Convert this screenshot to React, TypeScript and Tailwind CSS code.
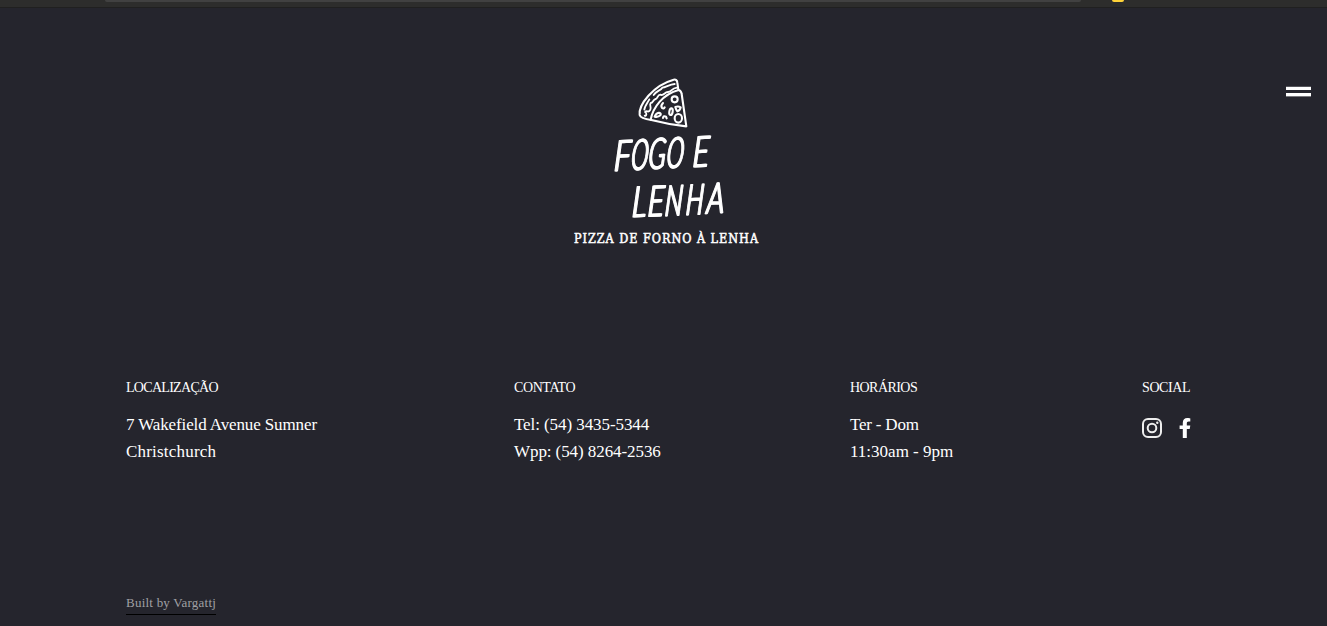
import React from "react";

type LetterProps = { char: string; x: number; y: number; w?: number };

function Letter({ char, x, y, w = 0.56 }: LetterProps) {
  return (
    <text transform={`translate(${x} ${y}) skewX(-8) skewY(-3) scale(${w} 1)`} x="-3" y="0">
      {char}
    </text>
  );
}

function Logo() {
  return (
    <svg className="h-[176px] w-[200px] shrink-0 overflow-visible" viewBox="565 75 200 176" fill="none" role="img" aria-label="Fogo e Lenha">
      <g transform="translate(630 70) scale(.33333)" stroke="#fff" strokeWidth="6.3" strokeLinecap="round" strokeLinejoin="round">
        <path d="M131 29Q141 27 142 38L145 59Q154 62 155 72L169 169Q118 164 64 150Q32 146 29 135C25 105 69 46 131 29Z" />
        <path d="M62 149C69 112 98 73 146 60" />
        <path d="M44 137C50 139 51 128 45 126C51 119 56 131 61 119C65 112 57 105 62 99C70 99 68 89 77 87C83 87 82 74 91 74C101 79 103 66 114 66C125 66 123 55 141 53" strokeWidth="5.5" />
        <path d="M43 119C44 108 53 98 58 88M71 75C80 61 91 63 97 53C108 52 118 43 134 42" strokeWidth="5.5" />
        <circle cx="134" cy="88" r="9" />
        <ellipse cx="145" cy="145" rx="11" ry="13" />
        <ellipse cx="123" cy="125" rx="5" ry="10" transform="rotate(10 123 125)" />
        <path d="M136 111Q145 108 152 112Q150 122 142 124Q138 119 136 111Z" />
        <path d="M74 140Q77 130 87 128Q95 130 91 136Q85 142 74 140Z" />
        <path d="M99 99Q91 107 96 114Q101 118 104 112M99 144Q101 136 108 140L110 145" />
      </g>
      <g className="[filter:drop-shadow(1.1px_0_0_#fff)]" fill="#fff" stroke="#fff" strokeWidth="1.5" strokeLinejoin="round" fontFamily="Lato, sans-serif" fontWeight="300" fontSize="42.5">
        <Letter char="F" x={614} y={171} w={0.68} />
        <Letter char="O" x={630.8} y={170} w={0.5} />
        <Letter char="G" x={648} y={169} w={0.54} />
        <Letter char="O" x={666.2} y={168} w={0.5} />
        <Letter char="E" x={692.7} y={167} w={0.65} />
        <Letter char="L" x={632} y={217} w={0.66} />
        <Letter char="E" x={647.7} y={216.5} w={0.65} />
        <Letter char="N" x={664.7} y={216} w={0.54} />
        <Letter char="H" x={685.5} y={215} w={0.54} />
        <Letter char="A" x={706.7} y={213.5} w={0.62} />
      </g>
      <text x="574" y="243" textLength="184" fill="#fff" stroke="#fff" strokeWidth="0.5" fontFamily="'DejaVu Serif Condensed', 'DejaVu Serif', serif" fontSize="12.5">PIZZA DE FORNO À LENHA</text>
    </svg>
  );
}

export default function App() {
  return (
    <div className="flex h-[626px] w-full flex-col overflow-hidden bg-[#25252d] font-['Liberation_Serif',serif] text-white">
      <div className="flex h-2 shrink-0 border-b border-[#202020] bg-[#2d2d2c] pl-[105px]">
        <div className="h-[2px] w-[976px] rounded-b-full bg-[#414141]" />
        <div className="ml-[31px] h-[2px] w-3 rounded-b-[2px] bg-[#ffd338]" />
      </div>
      <header className="relative flex h-[369px] shrink-0 justify-center pt-[67px]">
        <div className="flex w-full justify-center pl-[3px]"><Logo /></div>
        <button className="absolute top-[78px] right-4 flex h-[11px] w-[25px] flex-col justify-between" aria-label="Menu">
          <span className="h-1 w-full border-t border-[#55555b] bg-white" />
          <span className="h-1 w-full border-b border-[#77777c] bg-white" />
        </button>
      </header>
      <main className="grid h-[216px] shrink-0 grid-cols-[388px_336px_292px_auto] pl-[126px] whitespace-nowrap">
        <section>
          <h2 className="text-[14px] leading-[21px] tracking-[-0.7px]">LOCALIZAÇÃO</h2>
          <p className="mt-[13px] text-[17px] leading-[27px] tracking-[-0.12px]">7 Wakefield Avenue Sumner<br /><span className="tracking-[0.2px]">Christchurch</span></p>
        </section>
        <section>
          <h2 className="text-[14px] leading-[21px] tracking-[-0.4px]">CONTATO</h2>
          <p className="mt-[13px] text-[17px] leading-[27px] tracking-[-0.08px]">Tel: (54) 3435-5344<br />Wpp: (54) 8264-2536</p>
        </section>
        <section>
          <h2 className="text-[14px] leading-[21px] tracking-[-0.55px]">HORÁRIOS</h2>
          <p className="mt-[13px] text-[17px] leading-[27px]"><span className="tracking-[-0.2px]">Ter - Dom</span><br />11:30am - 9pm</p>
        </section>
        <section>
          <h2 className="text-[14px] leading-[21px] tracking-[-0.4px]">SOCIAL</h2>
          <div className="mt-5 flex gap-[17px]">
            <svg className="h-5 w-5" viewBox="0 0 20 20" fill="none" stroke="#eee" strokeWidth="2">
              <rect x="1" y="1" width="18" height="18" rx="5" />
              <circle cx="10" cy="10" r="4.3" />
              <circle cx="15.3" cy="4.7" r="1.2" fill="#eee" stroke="none" />
            </svg>
            <svg className="h-5 w-3" viewBox="0 0 12 20" fill="#fff">
              <path d="M3.8 20V11H.6V7.4h3.2V4.8C3.8 1.8 5.5.1 8.4.1c1.3 0 2.9.3 2.9.3v3H9.7c-1.5 0-1.9.9-1.9 1.9v2.1h3.5l-.6 3.6H7.8v9Z" />
            </svg>
          </div>
        </section>
      </main>
      <footer className="flex pl-[126px]">
        <a className="h-[22px] border-b border-black text-[13px] leading-[20px] tracking-[0.23px] text-[#a0a0a4]">Built by Vargattj</a>
      </footer>
    </div>
  );
}
